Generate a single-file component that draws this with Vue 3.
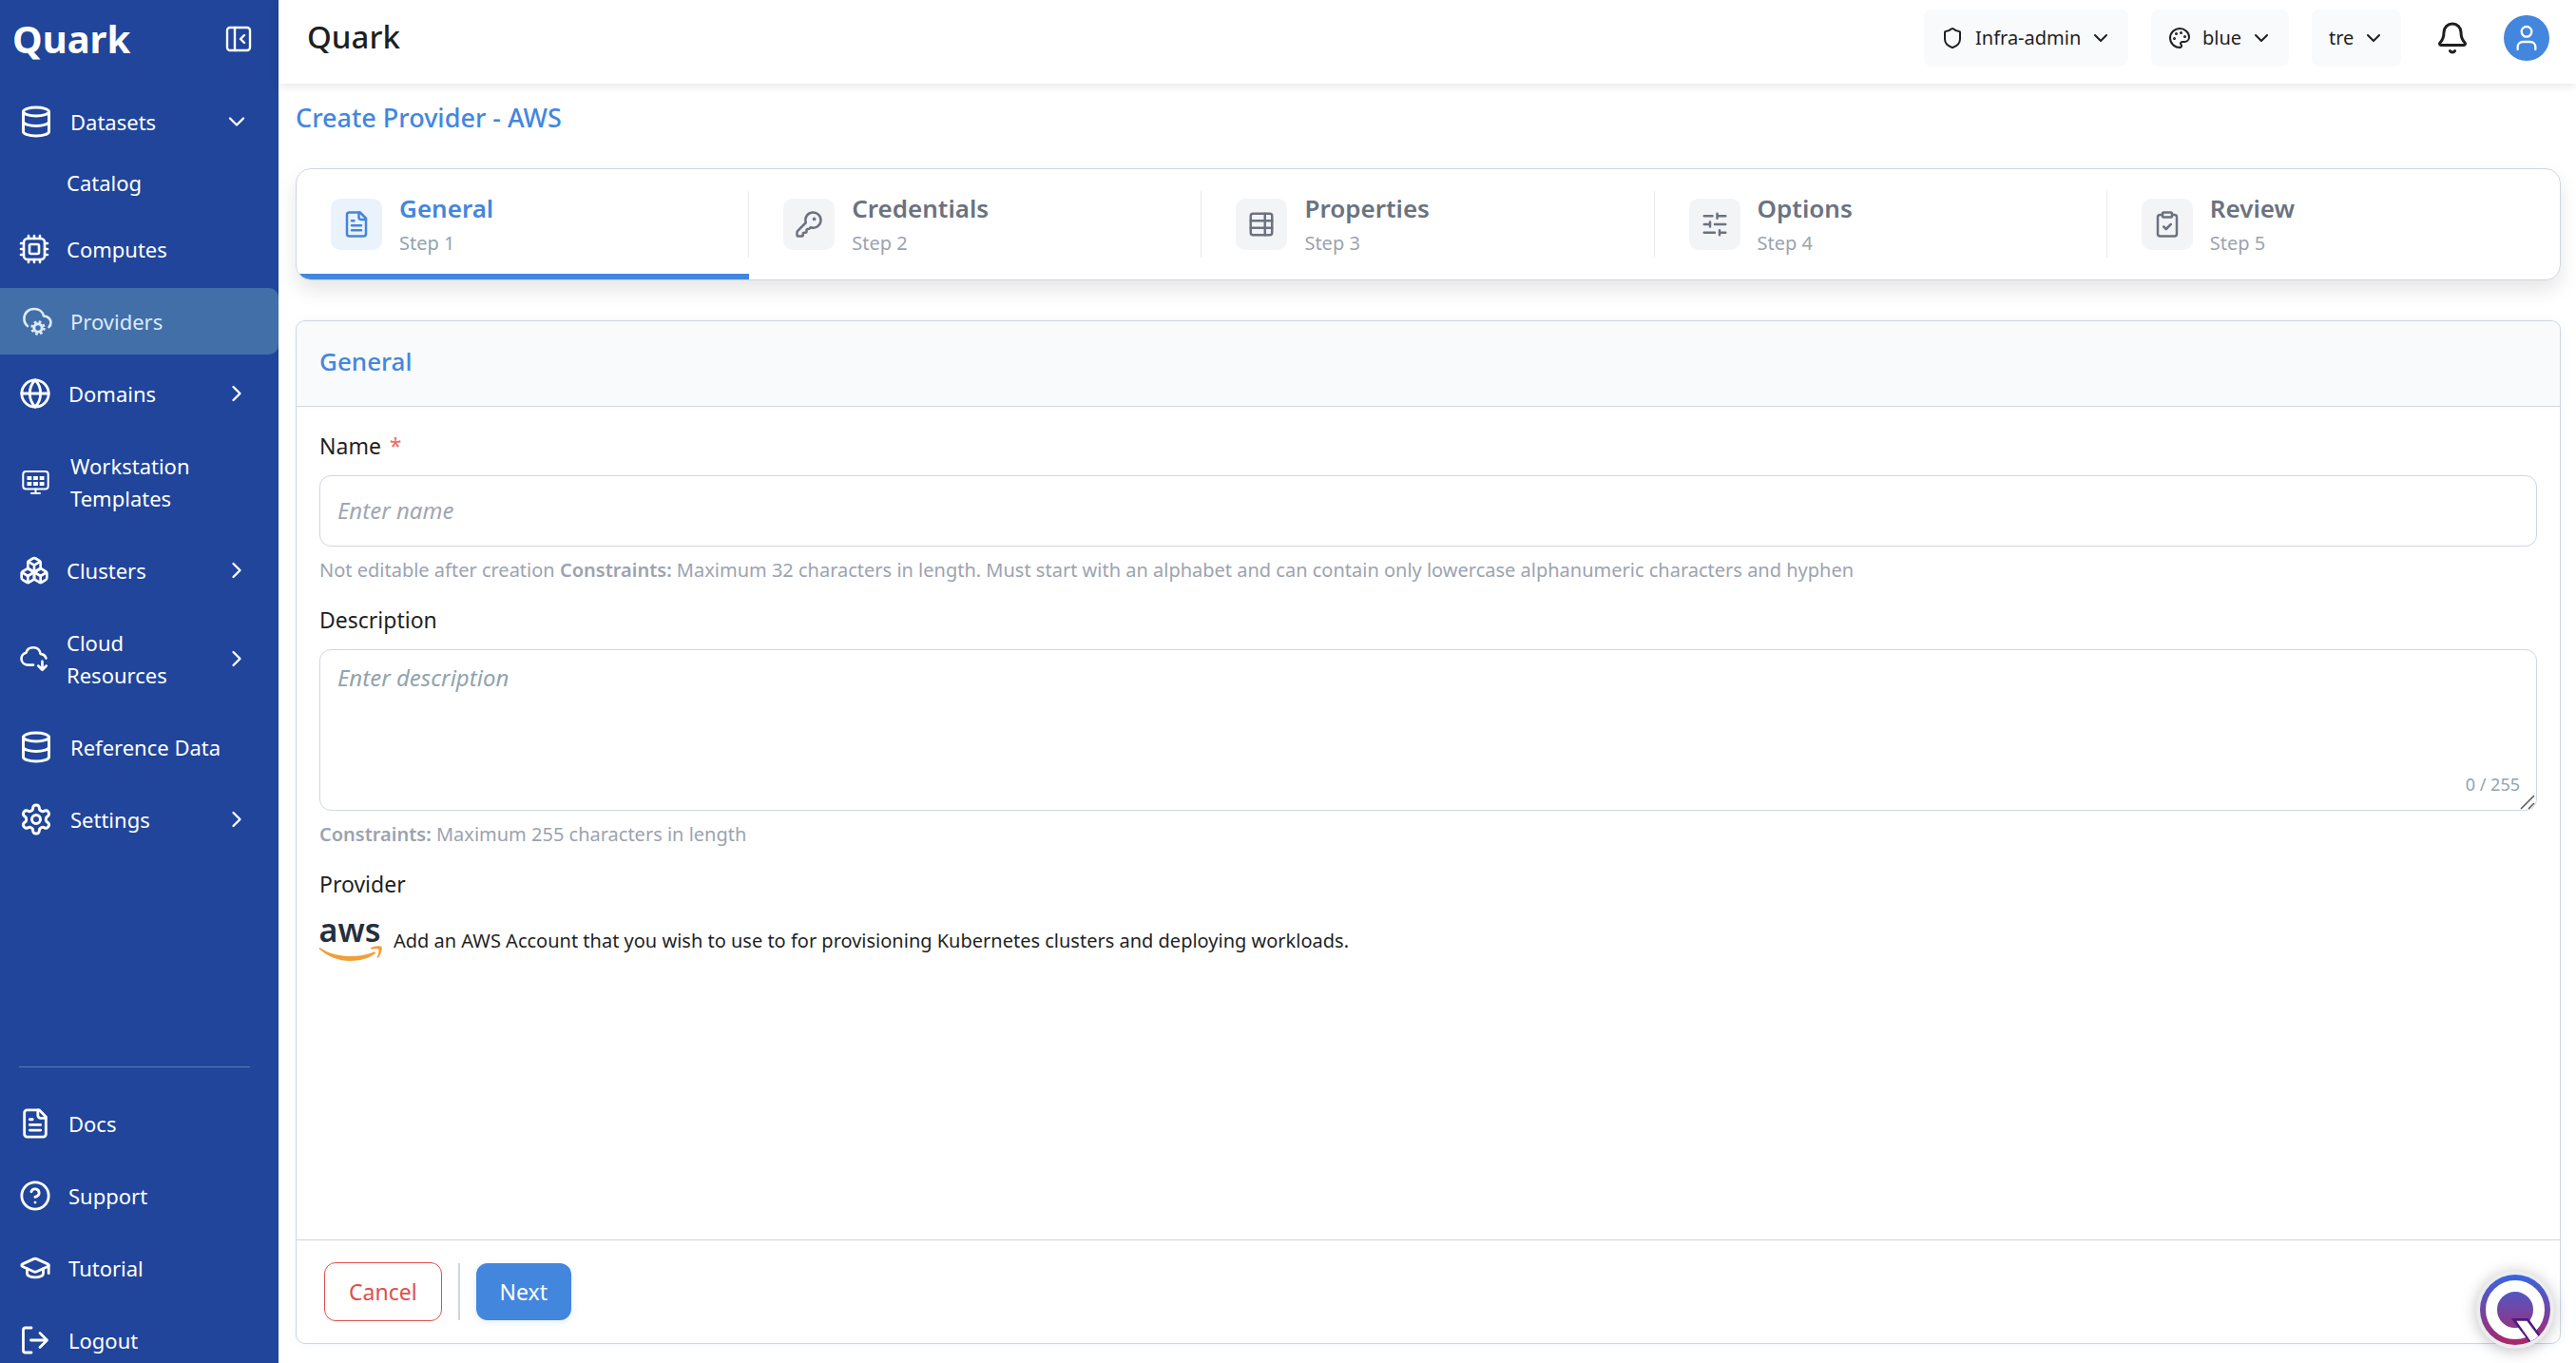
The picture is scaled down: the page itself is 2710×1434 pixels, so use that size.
<script setup>
import { ref } from 'vue'

const name = ref('')
const description = ref('')

const icons = {
  database: '<ellipse cx="12" cy="5" rx="9" ry="3"/><path d="M3 5v14a9 3 0 0 0 18 0V5M3 12a9 3 0 0 0 18 0"/>',
  chip: '<g transform="scale(.75)" stroke-width="2.6"><rect x="5" y="5" width="22" height="22" rx="4"/><rect x="11" y="11" width="10" height="10" rx="1.5"/><path d="M10 2v3M16 2v3M22 2v3M10 27v3M16 27v3M22 27v3M2 10h3M2 16h3M2 22h3M27 10h3M27 16h3M27 22h3"/></g>',
  cloudGear: '<g transform="scale(.6667)" stroke-width="2.6"><path d="M9 23A9.500 9.500 0 0 1 5.500 15C5.500 9 10 5 16 5c5 0 9 3 10 7.500 4 0 7.500 3 7.500 6.500 0 2-.7 4-2 5"/><circle cx="20" cy="25" r="4.200" stroke-width="3"/><circle cx="20" cy="25" r="6.500" stroke-width="2.400" stroke-linecap="butt" stroke-dasharray="2.700 2.400"/></g>',
  globe: '<circle cx="12" cy="12" r="10"/><path d="M12 2a14.500 14.500 0 0 0 0 20 14.500 14.500 0 0 0 0-20M2 12h20"/>',
  monitor: '<g transform="scale(.6667)" stroke-width="2"><rect x="4.300" y="7" width="26.400" height="18.500" rx="3"/><path d="M17.500 25.500V30M13 30h9"/><path stroke="none" fill="currentColor" d="M8.500 12h4.800v4H8.500zM15.100 12h4.800v4h-4.800zM21.700 12h4.800v4h-4.800zM8.500 18h4.800v4H8.500zM15.100 18h4.800v4h-4.800zM21.700 18h4.800v4h-4.800z"/></g>',
  boxes: '<path d="M2.970 12.920A2 2 0 0 0 2 14.630v3.240a2 2 0 0 0 .97 1.710l3 1.800a2 2 0 0 0 2.060 0L12 19v-5.500l-5-3-4.030 2.420Z"/><path d="m7 16.500-4.740-2.850M7 16.500l5-3M7 16.500v5.170"/><path d="M12 13.500V19l3.970 2.380a2 2 0 0 0 2.060 0l3-1.800a2 2 0 0 0 .97-1.710v-3.240a2 2 0 0 0-.97-1.710L17 10.500l-5 3Z"/><path d="m17 16.500-5-3M17 16.500l4.740-2.850M17 16.500v5.170"/><path d="M7.970 4.420A2 2 0 0 0 7 6.130v4.370l5 3 5-3V6.130a2 2 0 0 0-.97-1.710l-3-1.800a2 2 0 0 0-2.060 0l-3 1.800Z"/><path d="M12 8 7.260 5.150M12 8l4.740-2.850M12 13.500V8"/>',
  cloudDown: '<g transform="scale(.7059)" stroke-width="2.8"><path d="M16 24H9.500a7 7 0 0 1-1.500-13.800C9 6.500 12 4.500 15.800 4.500c4.200 0 7.500 2.500 8.200 7 3.500.5 5.500 2.300 6.200 5M26 20v8.500M21.500 25l4.500 4.500 4.500-4.500"/></g>',
  gear: '<path d="M12.220 2h-.44a2 2 0 0 0-2 2v.18a2 2 0 0 1-1 1.730l-.43.25a2 2 0 0 1-2 0l-.15-.08a2 2 0 0 0-2.730.73l-.22.38a2 2 0 0 0 .73 2.730l.15.1a2 2 0 0 1 1 1.720v.51a2 2 0 0 1-1 1.740l-.15.09a2 2 0 0 0-.73 2.730l.22.38a2 2 0 0 0 2.730.73l.15-.08a2 2 0 0 1 2 0l.43.25a2 2 0 0 1 1 1.730V20a2 2 0 0 0 2 2h.44a2 2 0 0 0 2-2v-.18a2 2 0 0 1 1-1.730l.43-.25a2 2 0 0 1 2 0l.15.08a2 2 0 0 0 2.730-.73l.22-.39a2 2 0 0 0-.73-2.730l-.15-.08a2 2 0 0 1-1-1.740v-.5a2 2 0 0 1 1-1.740l.15-.09a2 2 0 0 0 .73-2.730l-.22-.38a2 2 0 0 0-2.730-.73l-.15.08a2 2 0 0 1-2 0l-.43-.25a2 2 0 0 1-1-1.730V4a2 2 0 0 0-2-2z"/><circle cx="12" cy="12" r="3"/>',
  file: '<path d="M15 2H6a2 2 0 0 0-2 2v16a2 2 0 0 0 2 2h12a2 2 0 0 0 2-2V7Z"/><path d="M14 2v4a2 2 0 0 0 2 2h4M10 9H8M16 13H8M16 17H8"/>',
  help: '<circle cx="12" cy="12" r="10"/><path d="M9.090 9a3 3 0 0 1 5.830 1c0 2-3 3-3 3M12 17h.01"/>',
  cap: '<path d="M21.420 10.922a1 1 0 0 0-.019-1.838L12.830 5.180a2 2 0 0 0-1.660 0L2.600 9.080a1 1 0 0 0 0 1.832l8.570 3.908a2 2 0 0 0 1.660 0z"/><path d="M22 10v6M6 12.500V16a6 3 0 0 0 12 0v-3.500"/>',
  logout: '<g transform="scale(.7059)" stroke-width="2.8"><path d="M13 4H6.500a2 2 0 0 0-2 2v22a2 2 0 0 0 2 2H13M12.500 17H29M22 9.500l7.500 7.500-7.500 7.500"/></g>',
  key: '<path d="M2.586 17.414A2 2 0 0 0 2 18.828V21a1 1 0 0 0 1 1h3a1 1 0 0 0 1-1v-1a1 1 0 0 1 1-1h1a1 1 0 0 0 1-1v-1a1 1 0 0 1 1-1h.172a2 2 0 0 0 1.414-.586l.814-.814a6.500 6.500 0 1 0-4-4z"/><circle cx="16.500" cy="7.500" r=".5" fill="currentColor"/>',
  table: '<rect x="3" y="3" width="18" height="18" rx="2"/><path d="M15 3v18M21 9H3M21 15H3"/>',
  sliders: '<path d="M10 5H3M12 19H3M14 3v4M16 17v4M21 12h-9M21 19h-5M21 5h-7M8 10v4M8 12H3"/>',
  clipboard: '<rect x="8" y="2" width="8" height="4" rx="1"/><path d="M16 4h2a2 2 0 0 1 2 2v14a2 2 0 0 1-2 2H6a2 2 0 0 1-2-2V6a2 2 0 0 1 2-2h2M9 14l2 2 4-4"/>',
  shield: '<path d="M20 13c0 5-3.500 7.500-7.660 8.950a1 1 0 0 1-.67-.01C7.500 20.500 4 18 4 13V6a1 1 0 0 1 1-1c2 0 4.500-1.200 6.240-2.720a1.170 1.170 0 0 1 1.520 0C14.510 3.810 17 5 19 5a1 1 0 0 1 1 1z"/>',
  palette: '<path d="M12 22a1 1 0 0 1 0-20 10 9 0 0 1 10 9 5 5 0 0 1-5 5h-2.250a1.750 1.750 0 0 0-1.400 2.800l.3.4a1.750 1.750 0 0 1-1.400 2.800z"/><g fill="currentColor"><circle cx="13.500" cy="6.500" r=".5"/><circle cx="17.500" cy="10.500" r=".5"/><circle cx="6.500" cy="12.500" r=".5"/><circle cx="8.500" cy="7.500" r=".5"/></g>',
  bell: '<path d="M3.262 15.326A1 1 0 0 0 4 17h16a1 1 0 0 0 .74-1.673C19.410 13.956 18 12.499 18 8A6 6 0 0 0 6 8c0 4.499-1.411 5.956-2.738 7.326M10.268 21a2 2 0 0 0 3.464 0"/>',
  user: '<path d="M19 21v-2a4 4 0 0 0-4-4H9a4 4 0 0 0-4 4v2"/><circle cx="12" cy="7" r="4"/>',
  right: '<path d="m9 18 6-6-6-6"/>',
  down: '<path d="m6 9 6 6 6-6"/>'
}

const mainNav = [
  { label: 'Datasets', icon: 'database', size: 'lg', chevron: 'down' },
  { label: 'Catalog', sub: true },
  { label: 'Computes', icon: 'chip', size: 'sm' },
  { label: 'Providers', icon: 'cloudGear', size: 'lg', active: true },
  { label: 'Domains', icon: 'globe', size: 'md', chevron: 'right' },
  { label: 'Workstation Templates', icon: 'monitor', size: 'lg' },
  { label: 'Clusters', icon: 'boxes', size: 'sm', chevron: 'right' },
  { label: 'Cloud Resources', icon: 'cloudDown', size: 'sm', chevron: 'right' },
  { label: 'Reference Data', icon: 'database', size: 'lg' },
  { label: 'Settings', icon: 'gear', size: 'lg', chevron: 'right' }
]
const footNav = [
  { label: 'Docs', icon: 'file' },
  { label: 'Support', icon: 'help' },
  { label: 'Tutorial', icon: 'cap' },
  { label: 'Logout', icon: 'logout' }
]
const pickers = [
  { label: 'Role', value: 'Infra-admin', icon: 'shield' },
  { label: 'Theme', value: 'blue', icon: 'palette' },
  { label: 'Workspace', value: 'tre' }
]
const steps = [
  { label: 'General', icon: 'file' },
  { label: 'Credentials', icon: 'key' },
  { label: 'Properties', icon: 'table' },
  { label: 'Options', icon: 'sliders' },
  { label: 'Review', icon: 'clipboard' }
]
</script>

<template>
  <div class="app">
    <aside class="sidebar">
      <div class="brand">
        <span class="logo">Quark</span>
        <button class="collapse" type="button" aria-label="Collapse sidebar">
          <svg viewBox="0 0 28 28" class="icon collapse-icon">
            <rect x="2" y="2" width="24" height="24" rx="3" />
            <path d="M10 2v24M20 10l-4 4 4 4" />
          </svg>
        </button>
      </div>
      <nav class="nav" aria-label="Main">
        <a v-for="item in mainNav" :key="item.label" href="#" class="nav-item" :class="{ active: item.active, sub: item.sub }">
          <svg v-if="item.icon" viewBox="0 0 24 24" class="icon" :class="item.size" v-html="icons[item.icon]"></svg>
          <span class="nav-label">{{ item.label }}</span>
          <svg v-if="item.chevron" viewBox="0 0 24 24" class="icon chevron" v-html="icons[item.chevron]"></svg>
        </a>
      </nav>
      <nav class="nav nav-foot" aria-label="Help">
        <hr class="rule" />
        <a v-for="item in footNav" :key="item.label" href="#" class="nav-item">
          <svg viewBox="0 0 24 24" class="icon md" v-html="icons[item.icon]"></svg>
          <span class="nav-label">{{ item.label }}</span>
        </a>
      </nav>
    </aside>

    <div class="main">
      <header class="topbar">
        <h1 class="product">Quark</h1>
        <div class="tools">
          <label v-for="p in pickers" :key="p.label" class="picker">
            <svg v-if="p.icon" viewBox="0 0 24 24" class="icon xs" v-html="icons[p.icon]"></svg>
            <select class="picker-select" :aria-label="p.label"><option>{{ p.value }}</option></select>
            <svg viewBox="0 0 24 24" class="icon xs" v-html="icons.down"></svg>
          </label>
          <button class="bell" type="button" aria-label="Notifications">
            <svg viewBox="0 0 24 24" class="icon lg" v-html="icons.bell"></svg>
          </button>
          <button class="avatar" type="button" aria-label="Account">
            <svg viewBox="0 0 24 24" class="icon sm" v-html="icons.user"></svg>
          </button>
        </div>
      </header>

      <main class="content">
        <h2 class="page-title">Create Provider - AWS</h2>

        <ol class="steps">
          <li v-for="(s, i) in steps" :key="s.label" class="step" :class="{ current: i === 0 }">
            <span class="tile"><svg viewBox="0 0 24 24" class="icon step-icon" v-html="icons[s.icon]"></svg></span>
            <span class="step-text">
              <span class="step-name">{{ s.label }}</span>
              <span class="step-no">Step {{ i + 1 }}</span>
            </span>
          </li>
        </ol>

        <form class="card" @submit.prevent>
          <h3 class="card-head">General</h3>
          <div class="card-body">
            <div class="field">
              <label class="label" for="name">Name <span class="req">*</span></label>
              <input id="name" v-model="name" class="control" type="text" placeholder="Enter name" />
              <p class="hint">Not editable after creation <b>Constraints:</b> Maximum 32 characters in length. Must start with an alphabet and can contain only lowercase alphanumeric characters and hyphen</p>
            </div>
            <div class="field">
              <label class="label" for="description">Description</label>
              <div class="area">
                <textarea id="description" v-model="description" class="control" maxlength="255" placeholder="Enter description"></textarea>
                <span class="count">{{ description.length }} / 255</span>
                <svg class="grip" viewBox="0 0 16 16"><path d="M1 15 15 1M9 15l6-6" /></svg>
              </div>
              <p class="hint"><b>Constraints:</b> Maximum 255 characters in length</p>
            </div>
            <div class="field">
              <span class="label">Provider</span>
              <div class="provider">
                <svg class="aws" viewBox="0 0 66 42" role="img" aria-label="AWS">
                  <text x="32" y="22" text-anchor="middle">aws</text>
                  <path d="M.5 28C10 34.500 21 37 33 37c8.500 0 17-1.300 24.500-4.500 1.300-.5 2.300.8 1.100 1.800C52 39.500 42 42 32.500 42 20 42 9 37.500.2 29.800c-.8-.7-.4-2.200.3-1.800Z" />
                  <path d="M54 28.300c3-2.300 10.300-2.800 11.400-1.300 1.100 1.500-.4 8.700-3.600 11.600-.8.6-1.400.2-1.100-.6 1-2.300 2.500-7 1.600-8.100-.8-1.100-5.300-.5-7.500-.3-.9.100-1.300-.8-.8-1.300Z" />
                </svg>
                <span>Add an AWS Account that you wish to use to for provisioning Kubernetes clusters and deploying workloads.</span>
              </div>
            </div>
          </div>
          <footer class="card-foot">
            <button type="button" class="btn cancel">Cancel</button>
            <span class="sep"></span>
            <button type="submit" class="btn next">Next</button>
          </footer>
        </form>
      </main>
    </div>

    <button class="assistant" type="button" aria-label="Open assistant">
      <svg viewBox="-41 -41 82 82">
        <defs>
          <linearGradient id="fab" x1="0" y1="0" x2="0" y2="1">
            <stop offset="0" stop-color="#3766e0" />
            <stop offset="1" stop-color="#ab2668" />
          </linearGradient>
          <clipPath id="disc"><circle r="37" /></clipPath>
        </defs>
        <circle r="37" fill="url(#fab)" />
        <circle r="25" fill="none" stroke="#fff" stroke-width="12" />
        <g clip-path="url(#disc)">
          <path d="M-4.300 9H13.700L28 29 16.500 36Z" fill="#4d1a7f" />
          <path d="M1.300 11.700H12.300L26 30 17 34Z" fill="#fff" />
        </g>
      </svg>
    </button>
  </div>
</template>

<style>
body { margin: 0; background: #fff; }
</style>

<style scoped>
* { box-sizing: border-box; }
.app { display: flex; height: 100vh; overflow: hidden; font-family: "Noto Sans", sans-serif; color: #1f1f1f; }
button, input, textarea, select { font: inherit; color: inherit; }
button { cursor: pointer; }
h1, h2, h3, p, ol { margin: 0; padding: 0; }
.icon { display: block; flex: none; fill: none; stroke: currentColor; stroke-width: 2; stroke-linecap: round; stroke-linejoin: round; }
.xs { width: 24px; height: 24px; }
.sm { width: 32px; height: 32px; }
.md { width: 34px; height: 34px; }
.lg { width: 36px; height: 36px; }

.sidebar { display: flex; flex-direction: column; flex: none; width: 293px; background: #20459b; color: #fff; overflow: hidden; }
.brand { display: flex; align-items: center; justify-content: space-between; padding: 17px 28px 28px 13px; }
.logo { font-size: 40px; line-height: 48px; font-weight: 700; }
.collapse { padding: 0; border: 0; background: none; }
.collapse-icon { width: 28px; height: 28px; stroke-width: 2.400; }
.nav { display: flex; flex-direction: column; gap: 6px; }
.nav-item { display: flex; align-items: center; gap: 18px; min-height: 70px; padding: 18px 30px 18px 20px; color: inherit; text-decoration: none; font-size: 22px; line-height: 34px; }
.nav-item.sub { min-height: 52px; padding: 6px 30px 12px 70px; }
.nav-item.active { background: #426fa8; color: #dcebfd; border-radius: 0 10px 10px 0; }
.nav-label { flex: 1; }
.nav-item .icon { margin-block: -1px; }
.chevron { width: 28px; height: 28px; }
.nav-foot { margin-top: auto; margin-bottom: -11px; }
.rule { width: auto; height: 1px; margin: 0 30px 18px 20px; border: 0; background: #5f7cb8; }

.main { display: flex; flex-direction: column; flex: 1; min-width: 0; }
.topbar { display: flex; align-items: center; justify-content: space-between; height: 88px; padding: 0 28px 8px 30px; box-shadow: 0 2px 10px rgba(0, 0, 0, .1); }
.product { padding-bottom: 2px; font-size: 33px; line-height: 48px; font-weight: 500; }
.tools { display: flex; align-items: center; gap: 24px; }
.picker { display: flex; align-items: center; gap: 12px; height: 60px; padding: 0 17px 0 18px; border-radius: 8px; background: #f9fafc; font-size: 20px; }
.picker-select { appearance: none; margin-right: -4px; padding: 0; border: 0; background: none; line-height: 30px; }
.bell { margin: 0 12px; padding: 0; border: 0; background: none; }
.avatar { display: flex; align-items: center; justify-content: center; width: 48px; height: 48px; padding: 0; border: 0; border-radius: 50%; background: #4386de; color: #fff; }
.avatar .icon { stroke-width: 1.700; }

.content { display: flex; flex-direction: column; flex: 1; min-height: 0; padding: 18px 16px 20px 18px; }
.page-title { color: #4386de; font-size: 27px; line-height: 36px; font-weight: 500; }
.steps { display: flex; height: 118px; margin-top: 35px; border: 1px solid #cfd6df; border-radius: 16px; list-style: none; overflow: hidden; box-shadow: 0 10px 20px rgba(0, 0, 0, .1); flex: none; }
.step { position: relative; display: flex; flex: 1; align-items: center; gap: 18px; padding-left: 36px; color: #6b7280; }
.step:not(:last-child)::before { content: ""; position: absolute; right: 0; top: 23px; bottom: 23px; width: 1px; background: #e8eaed; }
.tile { display: flex; align-items: center; justify-content: center; width: 54px; height: 54px; border-radius: 10px; background: #f3f4f6; }
.step-icon { width: 30px; height: 30px; }
.step-text { display: flex; flex-direction: column; gap: 4px; }
.step-name { font-size: 26px; line-height: 36px; font-weight: 600; }
.step-no { font-size: 20px; line-height: 30px; color: #9ca3af; }
.current { color: #4386de; }
.current .tile { background: #eaf2fc; }
.current .step-no { color: #90a4ae; }
.current::after { content: ""; position: absolute; left: 0; right: 0; bottom: 0; height: 6px; background: #4386de; }

.card { display: flex; flex-direction: column; flex: 1; min-height: 0; margin-top: 42px; border: 1px solid #cfd6df; border-radius: 10px; box-shadow: 0 0 8px rgba(67, 134, 222, .08); background: #fff; }
.card-head { padding: 24px 24px 29px; border-bottom: 1px solid #cfd6df; border-radius: 10px 10px 0 0; background: #f9fafc; color: #4386de; font-size: 26px; line-height: 36px; font-weight: 500; }
.card-body { display: flex; flex-direction: column; flex: 1; gap: 19px; padding: 23px 24px; }
.field { display: flex; flex-direction: column; }
.label { margin-bottom: 13px; font-size: 23px; line-height: 36px; }
.req { margin-left: 3px; color: #ee6a6a; }
.control { display: block; width: 100%; height: 75px; padding: 0 18px 2px; border: 1px solid #cfd6df; border-radius: 12px; background: #fff; outline: 0; font-size: 24px; line-height: 36px; }
.control::placeholder { color: #a1a6b3; font-style: italic; opacity: 1; }
textarea.control { height: 170px; padding: 11px 18px; resize: none; }
textarea.control::placeholder { color: #90a4ae; }
.area { position: relative; }
.count { position: absolute; right: 18px; bottom: 15px; color: #90a4ae; font-size: 18px; line-height: 26px; }
.grip { position: absolute; right: 2px; bottom: 1px; width: 16px; height: 16px; fill: none; stroke: #555; stroke-width: 1.500; }
.hint { margin-top: 10px; color: #9ca3af; font-size: 20px; line-height: 30px; }
.hint b { font-weight: 600; }
.provider { display: flex; align-items: center; gap: 12px; margin-top: 8px; font-size: 20px; line-height: 30px; }
.aws { flex: none; width: 66px; height: 42px; fill: #f29f38; overflow: visible; }
.aws text { fill: #252f3e; font-size: 34px; font-weight: 600; }
.card-foot { display: flex; align-items: center; gap: 17px; padding: 23px 29px; border-top: 1px solid #cfd6df; }
.btn { height: 60px; padding: 0 25px; border: 0; border-radius: 12px; font-size: 23px; line-height: 36px; }
.cancel { height: 62px; border: 1px solid #e04f4b; background: #fff; color: #e04f4b; }
.next { background: #4386de; color: #fff; box-shadow: 0 2px 8px rgba(67, 134, 222, .15); }
.sep { width: 2px; height: 60px; background: #cfd6df; }

.assistant { position: fixed; right: 23px; bottom: 15px; width: 82px; height: 82px; padding: 0; border: 0; border-radius: 50%; background: #ececef; box-shadow: 0 2px 16px rgba(0, 0, 0, .25); }
.assistant svg { display: block; width: 82px; height: 82px; }
</style>
